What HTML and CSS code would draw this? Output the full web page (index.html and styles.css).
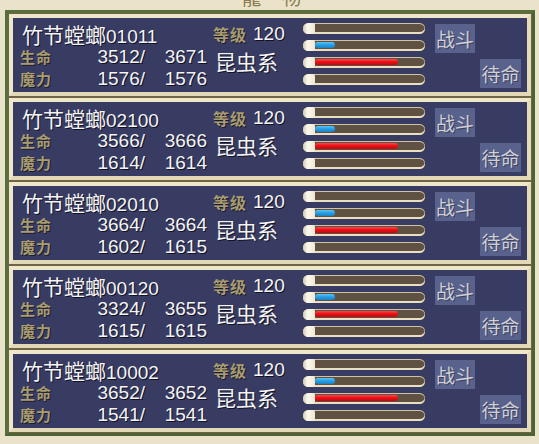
FILE: index.html
```html
<!DOCTYPE html>
<html lang="zh">
<head>
<meta charset="utf-8">
<link rel="stylesheet" href="styles.css">
</head>
<body>
<div class="title"><span>寵　物</span></div>
<div class="frame">
  <div class="card"><div class="inner">
    <div class="info">
      <div class="name">竹节螳螂<span class="digits">01011</span></div>
      <div class="stat"><span class="label">生命</span><span class="n1">3512/</span><span class="n2">3671</span></div>
      <div class="stat"><span class="label">魔力</span><span class="n1">1576/</span><span class="n2">1576</span></div>
    </div>
    <div class="cls">
      <div class="lv"><span class="label lvl">等级</span><span class="num">120</span></div>
      <div class="kind">昆虫系</div>
    </div>
    <div class="bars">
      <div class="bar"></div>
      <div class="bar"><div class="fill blue" style="width:20px"></div></div>
      <div class="bar"><div class="fill red" style="width:83px"></div></div>
      <div class="bar"></div>
    </div>
    <div class="btns"><div class="btn fight">战斗</div><div class="btn wait">待命</div></div>
  </div></div>

  <div class="card"><div class="inner">
    <div class="info">
      <div class="name">竹节螳螂<span class="digits">02100</span></div>
      <div class="stat"><span class="label">生命</span><span class="n1">3566/</span><span class="n2">3666</span></div>
      <div class="stat"><span class="label">魔力</span><span class="n1">1614/</span><span class="n2">1614</span></div>
    </div>
    <div class="cls">
      <div class="lv"><span class="label lvl">等级</span><span class="num">120</span></div>
      <div class="kind">昆虫系</div>
    </div>
    <div class="bars">
      <div class="bar"></div>
      <div class="bar"><div class="fill blue" style="width:20px"></div></div>
      <div class="bar"><div class="fill red" style="width:83px"></div></div>
      <div class="bar"></div>
    </div>
    <div class="btns"><div class="btn fight">战斗</div><div class="btn wait">待命</div></div>
  </div></div>

  <div class="card"><div class="inner">
    <div class="info">
      <div class="name">竹节螳螂<span class="digits">02010</span></div>
      <div class="stat"><span class="label">生命</span><span class="n1">3664/</span><span class="n2">3664</span></div>
      <div class="stat"><span class="label">魔力</span><span class="n1">1602/</span><span class="n2">1615</span></div>
    </div>
    <div class="cls">
      <div class="lv"><span class="label lvl">等级</span><span class="num">120</span></div>
      <div class="kind">昆虫系</div>
    </div>
    <div class="bars">
      <div class="bar"></div>
      <div class="bar"><div class="fill blue" style="width:20px"></div></div>
      <div class="bar"><div class="fill red" style="width:83px"></div></div>
      <div class="bar"></div>
    </div>
    <div class="btns"><div class="btn fight">战斗</div><div class="btn wait">待命</div></div>
  </div></div>

  <div class="card"><div class="inner">
    <div class="info">
      <div class="name">竹节螳螂<span class="digits">00120</span></div>
      <div class="stat"><span class="label">生命</span><span class="n1">3324/</span><span class="n2">3655</span></div>
      <div class="stat"><span class="label">魔力</span><span class="n1">1615/</span><span class="n2">1615</span></div>
    </div>
    <div class="cls">
      <div class="lv"><span class="label lvl">等级</span><span class="num">120</span></div>
      <div class="kind">昆虫系</div>
    </div>
    <div class="bars">
      <div class="bar"></div>
      <div class="bar"><div class="fill blue" style="width:20px"></div></div>
      <div class="bar"><div class="fill red" style="width:83px"></div></div>
      <div class="bar"></div>
    </div>
    <div class="btns"><div class="btn fight">战斗</div><div class="btn wait">待命</div></div>
  </div></div>

  <div class="card"><div class="inner">
    <div class="info">
      <div class="name">竹节螳螂<span class="digits">10002</span></div>
      <div class="stat"><span class="label">生命</span><span class="n1">3652/</span><span class="n2">3652</span></div>
      <div class="stat"><span class="label">魔力</span><span class="n1">1541/</span><span class="n2">1541</span></div>
    </div>
    <div class="cls">
      <div class="lv"><span class="label lvl">等级</span><span class="num">120</span></div>
      <div class="kind">昆虫系</div>
    </div>
    <div class="bars">
      <div class="bar"></div>
      <div class="bar"><div class="fill blue" style="width:20px"></div></div>
      <div class="bar"><div class="fill red" style="width:83px"></div></div>
      <div class="bar"></div>
    </div>
    <div class="btns"><div class="btn fight">战斗</div><div class="btn wait">待命</div></div>
  </div></div>
</div>
</body>
</html>
```

FILE: styles.css
```css
html, body {
  margin: 0;
  padding: 0;
}
body {
  width: 539px;
  height: 444px;
  overflow: hidden;
  background: #ebe3c9;
  font-family: "Noto Sans CJK SC", "Noto Sans", sans-serif;
  color: #f4f4f4;
}
.title {
  height: 10px;
  overflow: hidden;
  text-align: center;
}
.title span {
  display: block;
  margin-top: -13px;
  font-size: 20px;
  line-height: 20px;
  color: #8c7c52;
  padding-left: 4px;
}
.frame {
  margin-left: 5px;
  width: 524px;
  border: 3px solid #5a6c3c;
  border-color: #55703c #4a6434 #4a6434 #55703c;
}
.card {
  border: 1px solid #6f6544;
}
.inner {
  border: 4px solid #efe7c9;
  border-right-color: #e4dbbb;
  border-bottom-color: #e2d8b8;
  background: #393c62;
  height: 74px;
  display: flex;
  padding-left: 7px;
  box-sizing: content-box;
}
.info {
  width: 193px;
}
.name {
  height: 24px;
  padding-top: 4px;
  padding-left: 2px;
  font-size: 21px;
  line-height: 24px;
  text-shadow: 1px 1px 0 #121224;
  white-space: nowrap;
}
.digits {
  font-family: "Liberation Sans", "DejaVu Sans", sans-serif;
  font-size: 19px;
}
.stat {
  display: flex;
  height: 22px;
  line-height: 22px;
  align-items: center;
  white-space: nowrap;
}
.label {
  font-size: 15px;
  line-height: 18px;
  color: #a99c6f;
  font-weight: bold;
  text-shadow: 1px 1px 0 #1c1c30;
  width: 32px;
  letter-spacing: 1px;
}
.n1, .n2, .num {
  font-family: "Liberation Sans", "DejaVu Sans", sans-serif;
  font-size: 19px;
  line-height: 20px;
  text-shadow: 1px 1px 0 #121224;
}
.n1 {
  width: 93px;
  text-align: right;
}
.n2 {
  width: 62px;
  text-align: right;
}
.cls {
  width: 90px;
}
.lv {
  height: 24px;
  padding-top: 4px;
  display: flex;
  align-items: center;
  white-space: nowrap;
}
.lvl {
  font-size: 16px;
  width: auto;
  margin-right: 6px;
}
.kind {
  margin-top: 3px;
  margin-left: 2px;
  font-size: 21px;
  line-height: 24px;
  text-shadow: 1px 1px 0 #121224;
  white-space: nowrap;
}
.bars {
  width: 122px;
  padding-top: 5px;
  display: flex;
  flex-direction: column;
  gap: 6px;
}
.bar {
  position: relative;
  height: 11px;
  border-radius: 6px;
  background: #5f5243;
  box-shadow: inset 0 -2px 0 #e9dfc3, inset 0 1px 0 #cfc3a5, inset -1px 0 0 #7a6a52;
}
.bar::before {
  content: "";
  position: absolute;
  left: 0;
  top: 0;
  width: 12px;
  height: 11px;
  border-radius: 6px 2px 2px 6px;
  background: linear-gradient(90deg, #d6ccb0 0%, #fbf8ee 40%, #efe7d2 100%);
}
.fill {
  position: absolute;
  left: 12px;
  top: 2px;
  height: 6px;
  border-radius: 3px;
}
.blue {
  background: linear-gradient(180deg, #5cc4f4 0%, #2aa0e4 45%, #1c80c8 100%);
}
.red {
  background: linear-gradient(180deg, #ff4a4a 0%, #ec1018 45%, #c00810 100%);
}
.btns {
  display: flex;
  flex-direction: column;
  align-items: flex-start;
  padding-top: 6px;
  gap: 6px;
}
.btn {
  width: 40px;
  height: 29px;
  background: #59628c;
  color: #cfcfd4;
  font-size: 19px;
  line-height: 29px;
  text-align: center;
  white-space: nowrap;
  text-shadow: 1px 1px 0 #3a3f60;
}
.fight {
  margin-left: 10px;
}
.wait {
  margin-left: 55px;
  width: 41px;
}
```
